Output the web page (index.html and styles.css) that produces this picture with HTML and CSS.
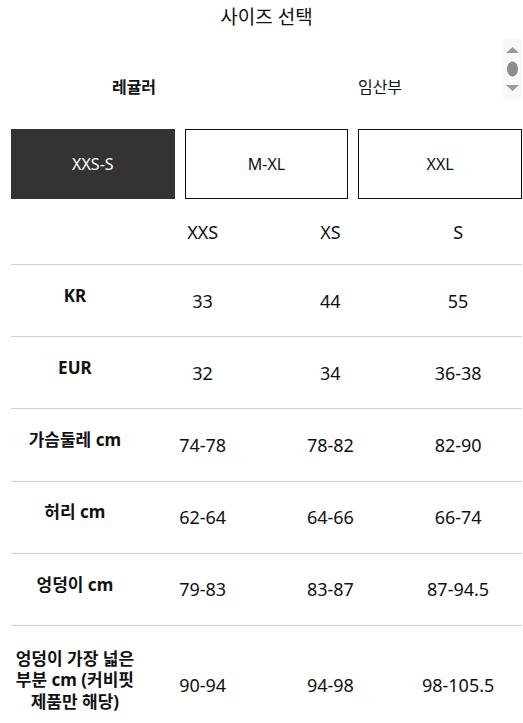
FILE: index.html
```html
<!DOCTYPE html>
<html lang="ko">
<head>
<meta charset="utf-8">
<link rel="stylesheet" href="styles.css">
</head>
<body>
<div class="page">
  <h1 class="title">사이즈 선택</h1>
  <div class="tabs">
    <div class="tab active">레귤러</div>
    <div class="tab">임산부</div>
    <div class="scroller">
      <svg width="19" height="60" viewBox="0 0 19 60">
        <polygon points="3,14 16,14 9.5,8" fill="#9a9a9a"/>
        <ellipse cx="9.5" cy="30" rx="5.5" ry="7.5" fill="#8c8c8c"/>
        <polygon points="3,46 16,46 9.5,52" fill="#9a9a9a"/>
      </svg>
    </div>
  </div>
  <div class="ranges">
    <div class="range selected">XXS-S</div>
    <div class="range">M-XL</div>
    <div class="range">XXL</div>
  </div>
  <div class="table">
    <div class="row head">
      <div class="cell label"></div>
      <div class="cell">XXS</div>
      <div class="cell">XS</div>
      <div class="cell">S</div>
    </div>
    <div class="row">
      <div class="cell label">KR</div>
      <div class="cell">33</div>
      <div class="cell">44</div>
      <div class="cell">55</div>
    </div>
    <div class="row">
      <div class="cell label">EUR</div>
      <div class="cell">32</div>
      <div class="cell">34</div>
      <div class="cell">36-38</div>
    </div>
    <div class="row">
      <div class="cell label">가슴둘레 cm</div>
      <div class="cell">74-78</div>
      <div class="cell">78-82</div>
      <div class="cell">82-90</div>
    </div>
    <div class="row">
      <div class="cell label">허리 cm</div>
      <div class="cell">62-64</div>
      <div class="cell">64-66</div>
      <div class="cell">66-74</div>
    </div>
    <div class="row">
      <div class="cell label">엉덩이 cm</div>
      <div class="cell">79-83</div>
      <div class="cell">83-87</div>
      <div class="cell">87-94.5</div>
    </div>
    <div class="row last">
      <div class="cell label">엉덩이 가장 넓은 부분 cm (커비핏 제품만 해당)</div>
      <div class="cell">90-94</div>
      <div class="cell">94-98</div>
      <div class="cell">98-105.5</div>
    </div>
  </div>
</div>
</body>
</html>
```
FILE: styles.css
```css
html, body {
  margin: 0;
  padding: 0;
  background: #fff;
}
body {
  font-family: "Noto Sans", "Noto Sans CJK KR", sans-serif;
  color: #111;
}
.page {
  padding: 0 1px 0 11px;
}
.title {
  margin: 0;
  padding-top: 4px;
  height: 35px;
  box-sizing: border-box;
  font-size: 19px;
  font-weight: 400;
  line-height: 26px;
  text-align: center;
}
.tabs {
  display: flex;
  height: 60px;
  margin-top: 4px;
}
.tab {
  flex: 1;
  text-align: center;
  font-size: 16px;
  line-height: 24px;
  padding-top: 36px;
}
.tab.active {
  font-weight: 700;
}
.scroller {
  width: 19px;
  height: 60px;
  background: #f8f8f8;
}
.scroller svg {
  display: block;
}
.ranges {
  display: flex;
  gap: 10px;
  margin-top: 30px;
}
.range {
  flex: 1;
  height: 70px;
  box-sizing: border-box;
  border: 1px solid #111;
  display: flex;
  align-items: center;
  justify-content: center;
  font-size: 16px;
  line-height: 22px;
}
.range.selected {
  background: #333;
  border-color: #333;
  color: #fff;
}
.table {
  display: flex;
  flex-direction: column;
}
.row {
  display: grid;
  grid-template-columns: repeat(4, 1fr);
  height: 72.2px;
  box-sizing: border-box;
  border-bottom: 1px solid #d0d0d0;
}
.row.head {
  height: 66px;
}
.row.head .cell {
  padding-bottom: 0;
}
.row.last {
  border-bottom: none;
  height: 118px;
}
.cell {
  display: flex;
  align-items: center;
  justify-content: center;
  text-align: center;
  font-size: 18px;
  line-height: 24px;
  padding-bottom: 0;
}
.cell.label {
  font-size: 17px;
  font-weight: 700;
  line-height: 21.5px;
  padding: 0 2px 10px;
}
.row.last .cell {
  padding-bottom: 0;
}
.row.last .cell.label {
  padding-bottom: 10px;
}
```
